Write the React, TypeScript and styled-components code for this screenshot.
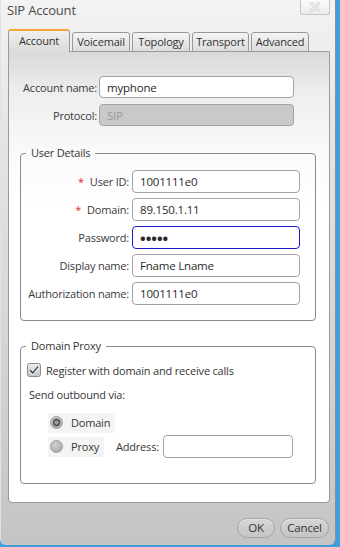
import React from 'react';
import styled, { createGlobalStyle } from 'styled-components';

const GlobalStyle = createGlobalStyle`
  html, body {
    margin: 0;
    padding: 0;
  }
  body {
    background: #3e9fdc;
    font-family: 'Open Sans', 'Noto Sans', sans-serif;
    font-size: 11px;
    letter-spacing: -0.2px;
    color: #363636;
  }
`;

const Window = styled.div`
  width: 336px;
  height: 545px;
  box-sizing: border-box;
  display: flex;
  flex-direction: column;
  background: linear-gradient(#f3f3f3 0, #e6e6e6 120px, #d2d2d2 380px, #c4c4c4 100%);
  border-left: 1px solid #e2e2e2;
  border-right: 1px solid #8e8e8e;
  border-radius: 0 0 6px 6px;
`;

const TitleBar = styled.div`
  height: 29px;
  display: flex;
  justify-content: space-between;
  align-items: flex-start;
`;

const Title = styled.div`
  padding: 1px 0 0 6px;
  font-size: 13px;
  color: #4a4a4a;
`;

const CloseButton = styled.div`
  width: 30px;
  height: 15px;
  margin-right: 5px;
  box-sizing: border-box;
  display: flex;
  align-items: center;
  justify-content: center;
  border: 1px solid #c6c6c6;
  border-top: none;
  border-radius: 0 0 3px 3px;
  background: linear-gradient(#fbfbfb, #ececec);
`;

const TabRow = styled.div`
  display: flex;
  align-items: flex-end;
  gap: 2px;
  margin-left: 7px;
  height: 23px;
  position: relative;
  z-index: 1;
  margin-bottom: -1px;
`;

const Tab = styled.div<{ $w: number; $active?: boolean }>`
  width: ${(p) => p.$w}px;
  height: ${(p) => (p.$active ? 23 : 20)}px;
  box-sizing: border-box;
  display: flex;
  align-items: center;
  justify-content: center;
  padding-bottom: ${(p) => (p.$active ? 3 : 1)}px;
  border: 1px solid #999;
  border-bottom: ${(p) => (p.$active ? 'none' : '1px solid #999')};
  border-top: ${(p) => (p.$active ? '2px solid #f3a73a' : '1px solid #999')};
  border-radius: 3px 3px 0 0;
  background: ${(p) =>
    p.$active ? 'linear-gradient(#f0f0f0, #dadada)' : 'linear-gradient(#f4f4f4, #dcdcdc)'};
  color: #333;
  font-size: 11px;
`;

const Panel = styled.div`
  height: 452px;
  margin: 0 5px 0 7px;
  box-sizing: border-box;
  border: 1px solid #9a9a9a;
  border-radius: 0 0 4px 4px;
  background: linear-gradient(#d9d9d9 0, #eeeeee 40px, #fbfbfb 110px, #fff 160px);
  display: flex;
  flex-direction: column;
`;

const AccountGrid = styled.div`
  display: grid;
  grid-template-columns: 88px 195px;
  column-gap: 2px;
  row-gap: 6px;
  margin-top: 24px;
`;

const UserGrid = styled.div`
  display: grid;
  grid-template-columns: 108px 168px;
  column-gap: 3px;
  row-gap: 5px;
  padding: 9px 0 15px;
`;

const Label = styled.label`
  display: flex;
  align-items: center;
  justify-content: flex-end;
  white-space: nowrap;
  color: #3a3a3a;
`;

const Required = styled.span`
  color: #e0262a;
  margin-right: 6px;
`;

const Input = styled.input<{ $h?: number }>`
  height: ${(p) => p.$h ?? 23}px;
  width: 100%;
  box-sizing: border-box;
  margin: 0;
  padding: 0 0 0 7px;
  border: 1px solid #a3a3a3;
  border-radius: 4px;
  background: #fff;
  font-family: inherit;
  font-size: 11.5px;
  letter-spacing: inherit;
  color: #2a2a2a;
  outline: none;

  &:disabled {
    background: #c9c9c9;
    color: #9a9a9a;
  }
  &[type='password'] {
    border-color: #1a1ad0;
    font-size: 15px;
    letter-spacing: 0;
    font-weight: bold;
  }
`;

const Group = styled.fieldset`
  margin: 0 13px 0 11px;
  padding: 0;
  border: 1px solid #8a8a8a;
  border-radius: 4px;
  min-width: 0;
`;

const Legend = styled.legend`
  margin-left: 5px;
  padding: 0 5px;
  line-height: 16px;
  color: #363636;
`;

const UserGroup = styled(Group)`
  margin-top: 19px;
`;

const ProxyGroup = styled(Group)`
  margin-top: 17px;
  padding: 0 0 25px;
  display: flex;
  flex-direction: column;
`;

const CheckRow = styled.div`
  display: flex;
  align-items: center;
  gap: 5px;
  height: 16px;
  margin: 8px 0 0 6px;
`;

const Caption = styled.div`
  height: 16px;
  line-height: 16px;
  margin: 9px 0 0 8px;
`;

const RadioRow = styled.div<{ $mt: number }>`
  display: flex;
  align-items: center;
  margin: ${(p) => p.$mt}px 0 0 27px;
  height: 23px;
`;

const RadioLabel = styled.div`
  display: flex;
  align-items: center;
  gap: 8px;
  height: 20px;
  padding: 0 5px 0 2px;
  background: #f4f4f4;
`;

const AddressLabel = styled.span`
  margin-left: 12px;
  margin-right: 4px;
`;

const AddressInput = styled(Input)`
  width: 130px;
`;

const Footer = styled.div`
  display: flex;
  justify-content: flex-end;
  gap: 5px;
  padding: 15px 6px 0 0;
`;

const Button = styled.button<{ $w: number }>`
  width: ${(p) => p.$w}px;
  height: 20px;
  margin: 0;
  padding: 0 0 1px;
  border: 1px solid #a6a6a6;
  border-radius: 10px;
  background: linear-gradient(#d6d6d6, #c4c4c4);
  box-shadow: inset 0 1px 0 #e2e2e2;
  font-family: inherit;
  font-size: 11.5px;
  letter-spacing: inherit;
  color: #333;
`;

const CloseIcon = () => (
  <svg width="12" height="10" viewBox="0 0 12 10">
    <path d="M2 1 L10 9 M10 1 L2 9" stroke="#d0d0d0" strokeWidth="3" strokeLinecap="round" />
    <path d="M2 1 L10 9 M10 1 L2 9" stroke="#f4f4f4" strokeWidth="1.2" strokeLinecap="round" />
  </svg>
);

const CheckIcon = () => (
  <svg width="14" height="14" viewBox="0 0 14 14">
    <defs>
      <linearGradient id="cb" x1="0" y1="0" x2="0" y2="1">
        <stop offset="0" stopColor="#ececec" />
        <stop offset="1" stopColor="#c2c2c2" />
      </linearGradient>
    </defs>
    <rect x="0.5" y="0.5" width="13" height="13" rx="2" fill="url(#cb)" stroke="#8c8c8c" />
    <path d="M3 7.2 L5.8 10 L11 3.5" fill="none" stroke="#fff" strokeWidth="3.4" strokeLinejoin="round" />
    <path d="M3 7.2 L5.8 10 L11 3.5" fill="none" stroke="#4e5a66" strokeWidth="1.8" strokeLinejoin="round" />
  </svg>
);

const RadioIcon = ({ checked }: { checked?: boolean }) => (
  <svg width="13" height="13" viewBox="0 0 13 13">
    <defs>
      <radialGradient id="rg" cx="0.4" cy="0.35" r="0.7">
        <stop offset="0" stopColor="#cfcfcf" />
        <stop offset="1" stopColor="#a8a8a8" />
      </radialGradient>
    </defs>
    <circle cx="6.5" cy="6.5" r="6" fill="url(#rg)" stroke="#a0a0a0" />
    {checked && <circle cx="6.5" cy="6.5" r="3" fill="#9a9a9a" stroke="#4a4a4a" strokeWidth="1.3" />}
  </svg>
);

const tabs = [
  { name: 'Account', w: 62, active: true },
  { name: 'Voicemail', w: 58 },
  { name: 'Topology', w: 58 },
  { name: 'Transport', w: 57 },
  { name: 'Advanced', w: 58 },
];

const userFields = [
  { label: 'User ID:', value: '1001111e0', required: true },
  { label: 'Domain:', value: '89.150.1.11', required: true },
  { label: 'Password:', value: '12345', password: true },
  { label: 'Display name:', value: 'Fname Lname' },
  { label: 'Authorization name:', value: '1001111e0' },
];

const App: React.FC = () => {
  return (
    <>
      <GlobalStyle />
      <Window>
        <TitleBar>
          <Title>SIP Account</Title>
          <CloseButton>
            <CloseIcon />
          </CloseButton>
        </TitleBar>

        <TabRow>
          {tabs.map((t) => (
            <Tab key={t.name} $w={t.w} $active={t.active}>
              {t.name}
            </Tab>
          ))}
        </TabRow>

        <Panel>
          <AccountGrid>
            <Label>Account name:</Label>
            <Input $h={22} defaultValue="myphone" />
            <Label>Protocol:</Label>
            <Input $h={22} defaultValue="SIP" disabled />
          </AccountGrid>

          <UserGroup>
            <Legend>User Details</Legend>
            <UserGrid>
              {userFields.map((f) => (
                <React.Fragment key={f.label}>
                  <Label>
                    {f.required && <Required>*</Required>}
                    {f.label}
                  </Label>
                  <Input type={f.password ? 'password' : 'text'} defaultValue={f.value} />
                </React.Fragment>
              ))}
            </UserGrid>
          </UserGroup>

          <ProxyGroup>
            <Legend>Domain Proxy</Legend>
            <CheckRow>
              <CheckIcon />
              <span>Register with domain and receive calls</span>
            </CheckRow>
            <Caption>Send outbound via:</Caption>
            <RadioRow $mt={8}>
              <RadioLabel>
                <RadioIcon checked />
                <span>Domain</span>
              </RadioLabel>
            </RadioRow>
            <RadioRow $mt={1}>
              <RadioLabel>
                <RadioIcon />
                <span>Proxy</span>
              </RadioLabel>
              <AddressLabel>Address:</AddressLabel>
              <AddressInput />
            </RadioRow>
          </ProxyGroup>
        </Panel>

        <Footer>
          <Button $w={38}>OK</Button>
          <Button $w={49}>Cancel</Button>
        </Footer>
      </Window>
    </>
  );
};

export default App;
